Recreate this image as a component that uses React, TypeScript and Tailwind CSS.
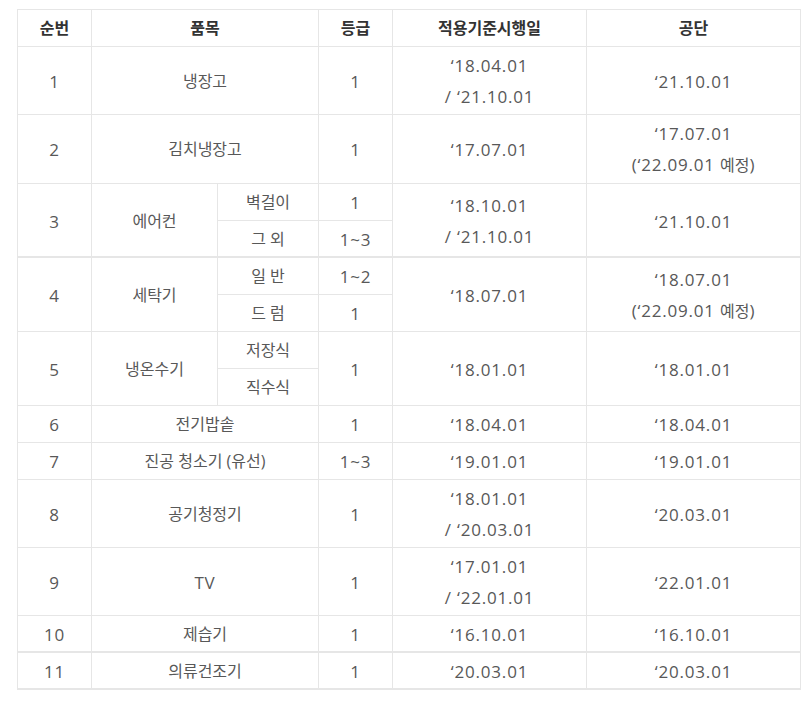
import React from "react";

const base =
  "border border-[#e6e6e6] text-center align-middle pt-[3px] px-1 font-normal";
const td = `${base} pb-[2px]`;
const tdt = `${base} pb-[1px] border-b-2`;
const n = "tracking-[0.8px] text-[17px]";
const th =
  "border border-[#e6e6e6] text-center align-middle pt-[3px] pb-[2px] px-1 font-bold text-[#333]";

export default function App() {
  return (
    <div
      className="bg-white w-[809px] h-[701px] pt-[9px] pl-[17px]"
      style={{ fontFamily: '"Open Sans", "Noto Sans CJK KR", sans-serif' }}
    >
      <table className="table-fixed border-collapse w-[783px] text-[16px] leading-[31px] text-[#585858]">
        <colgroup>
          <col className="w-[74px]" />
          <col className="w-[126px]" />
          <col className="w-[101px]" />
          <col className="w-[74px]" />
          <col className="w-[194px]" />
          <col className="w-[214px]" />
        </colgroup>
        <thead>
          <tr>
            <th className={th}>순번</th>
            <th className={th} colSpan={2}>품목</th>
            <th className={th}>등급</th>
            <th className={th}>적용기준시행일</th>
            <th className={th}>공단</th>
          </tr>
        </thead>
        <tbody>
          <tr>
            <td className={`${td} ${n}`}>1</td>
            <td className={td} colSpan={2}>냉장고</td>
            <td className={`${td} ${n}`}>1</td>
            <td className={`${td} ${n}`}>‘18.04.01<br />/ ‘21.10.01</td>
            <td className={`${td} ${n}`}>‘21.10.01</td>
          </tr>
          <tr>
            <td className={`${td} ${n}`}>2</td>
            <td className={td} colSpan={2}>김치냉장고</td>
            <td className={`${td} ${n}`}>1</td>
            <td className={`${td} ${n}`}>‘17.07.01</td>
            <td className={`${td} ${n}`}>‘17.07.01<br />(‘22.09.01 <span className="text-[16px] tracking-normal">예정</span>)</td>
          </tr>
          <tr>
            <td className={`${tdt} ${n}`} rowSpan={2}>3</td>
            <td className={tdt} rowSpan={2}>에어컨</td>
            <td className={td}>벽걸이</td>
            <td className={`${td} ${n}`}>1</td>
            <td className={`${tdt} ${n}`} rowSpan={2}>‘18.10.01<br />/ ‘21.10.01</td>
            <td className={`${tdt} ${n}`} rowSpan={2}>‘21.10.01</td>
          </tr>
          <tr>
            <td className={tdt}>그 외</td>
            <td className={`${tdt} ${n}`}>1~3</td>
          </tr>
          <tr>
            <td className={`${td} ${n}`} rowSpan={2}>4</td>
            <td className={td} rowSpan={2}>세탁기</td>
            <td className={td}>일 반</td>
            <td className={`${td} ${n}`}>1~2</td>
            <td className={`${td} ${n}`} rowSpan={2}>‘18.07.01</td>
            <td className={`${td} ${n}`} rowSpan={2}>‘18.07.01<br />(‘22.09.01 <span className="text-[16px] tracking-normal">예정</span>)</td>
          </tr>
          <tr>
            <td className={td}>드 럼</td>
            <td className={`${td} ${n}`}>1</td>
          </tr>
          <tr>
            <td className={`${td} ${n}`} rowSpan={2}>5</td>
            <td className={td} rowSpan={2}>냉온수기</td>
            <td className={td}>저장식</td>
            <td className={`${td} ${n}`} rowSpan={2}>1</td>
            <td className={`${td} ${n}`} rowSpan={2}>‘18.01.01</td>
            <td className={`${td} ${n}`} rowSpan={2}>‘18.01.01</td>
          </tr>
          <tr>
            <td className={td}>직수식</td>
          </tr>
          <tr>
            <td className={`${td} ${n}`}>6</td>
            <td className={td} colSpan={2}>전기밥솥</td>
            <td className={`${td} ${n}`}>1</td>
            <td className={`${td} ${n}`}>‘18.04.01</td>
            <td className={`${td} ${n}`}>‘18.04.01</td>
          </tr>
          <tr>
            <td className={`${td} ${n}`}>7</td>
            <td className={td} colSpan={2}>진공 청소기 (유선)</td>
            <td className={`${td} ${n}`}>1~3</td>
            <td className={`${td} ${n}`}>‘19.01.01</td>
            <td className={`${td} ${n}`}>‘19.01.01</td>
          </tr>
          <tr>
            <td className={`${td} ${n}`}>8</td>
            <td className={td} colSpan={2}>공기청정기</td>
            <td className={`${td} ${n}`}>1</td>
            <td className={`${td} ${n}`}>‘18.01.01<br />/ ‘20.03.01</td>
            <td className={`${td} ${n}`}>‘20.03.01</td>
          </tr>
          <tr>
            <td className={`${td} ${n}`}>9</td>
            <td className={`${td} ${n}`} colSpan={2}>TV</td>
            <td className={`${td} ${n}`}>1</td>
            <td className={`${td} ${n}`}>‘17.01.01<br />/ ‘22.01.01</td>
            <td className={`${td} ${n}`}>‘22.01.01</td>
          </tr>
          <tr>
            <td className={`${tdt} ${n}`}>10</td>
            <td className={tdt} colSpan={2}>제습기</td>
            <td className={`${tdt} ${n}`}>1</td>
            <td className={`${tdt} ${n}`}>‘16.10.01</td>
            <td className={`${tdt} ${n}`}>‘16.10.01</td>
          </tr>
          <tr>
            <td className={`${tdt} ${n}`}>11</td>
            <td className={tdt} colSpan={2}>의류건조기</td>
            <td className={`${tdt} ${n}`}>1</td>
            <td className={`${tdt} ${n}`}>‘20.03.01</td>
            <td className={`${tdt} ${n}`}>‘20.03.01</td>
          </tr>
        </tbody>
      </table>
    </div>
  );
}
